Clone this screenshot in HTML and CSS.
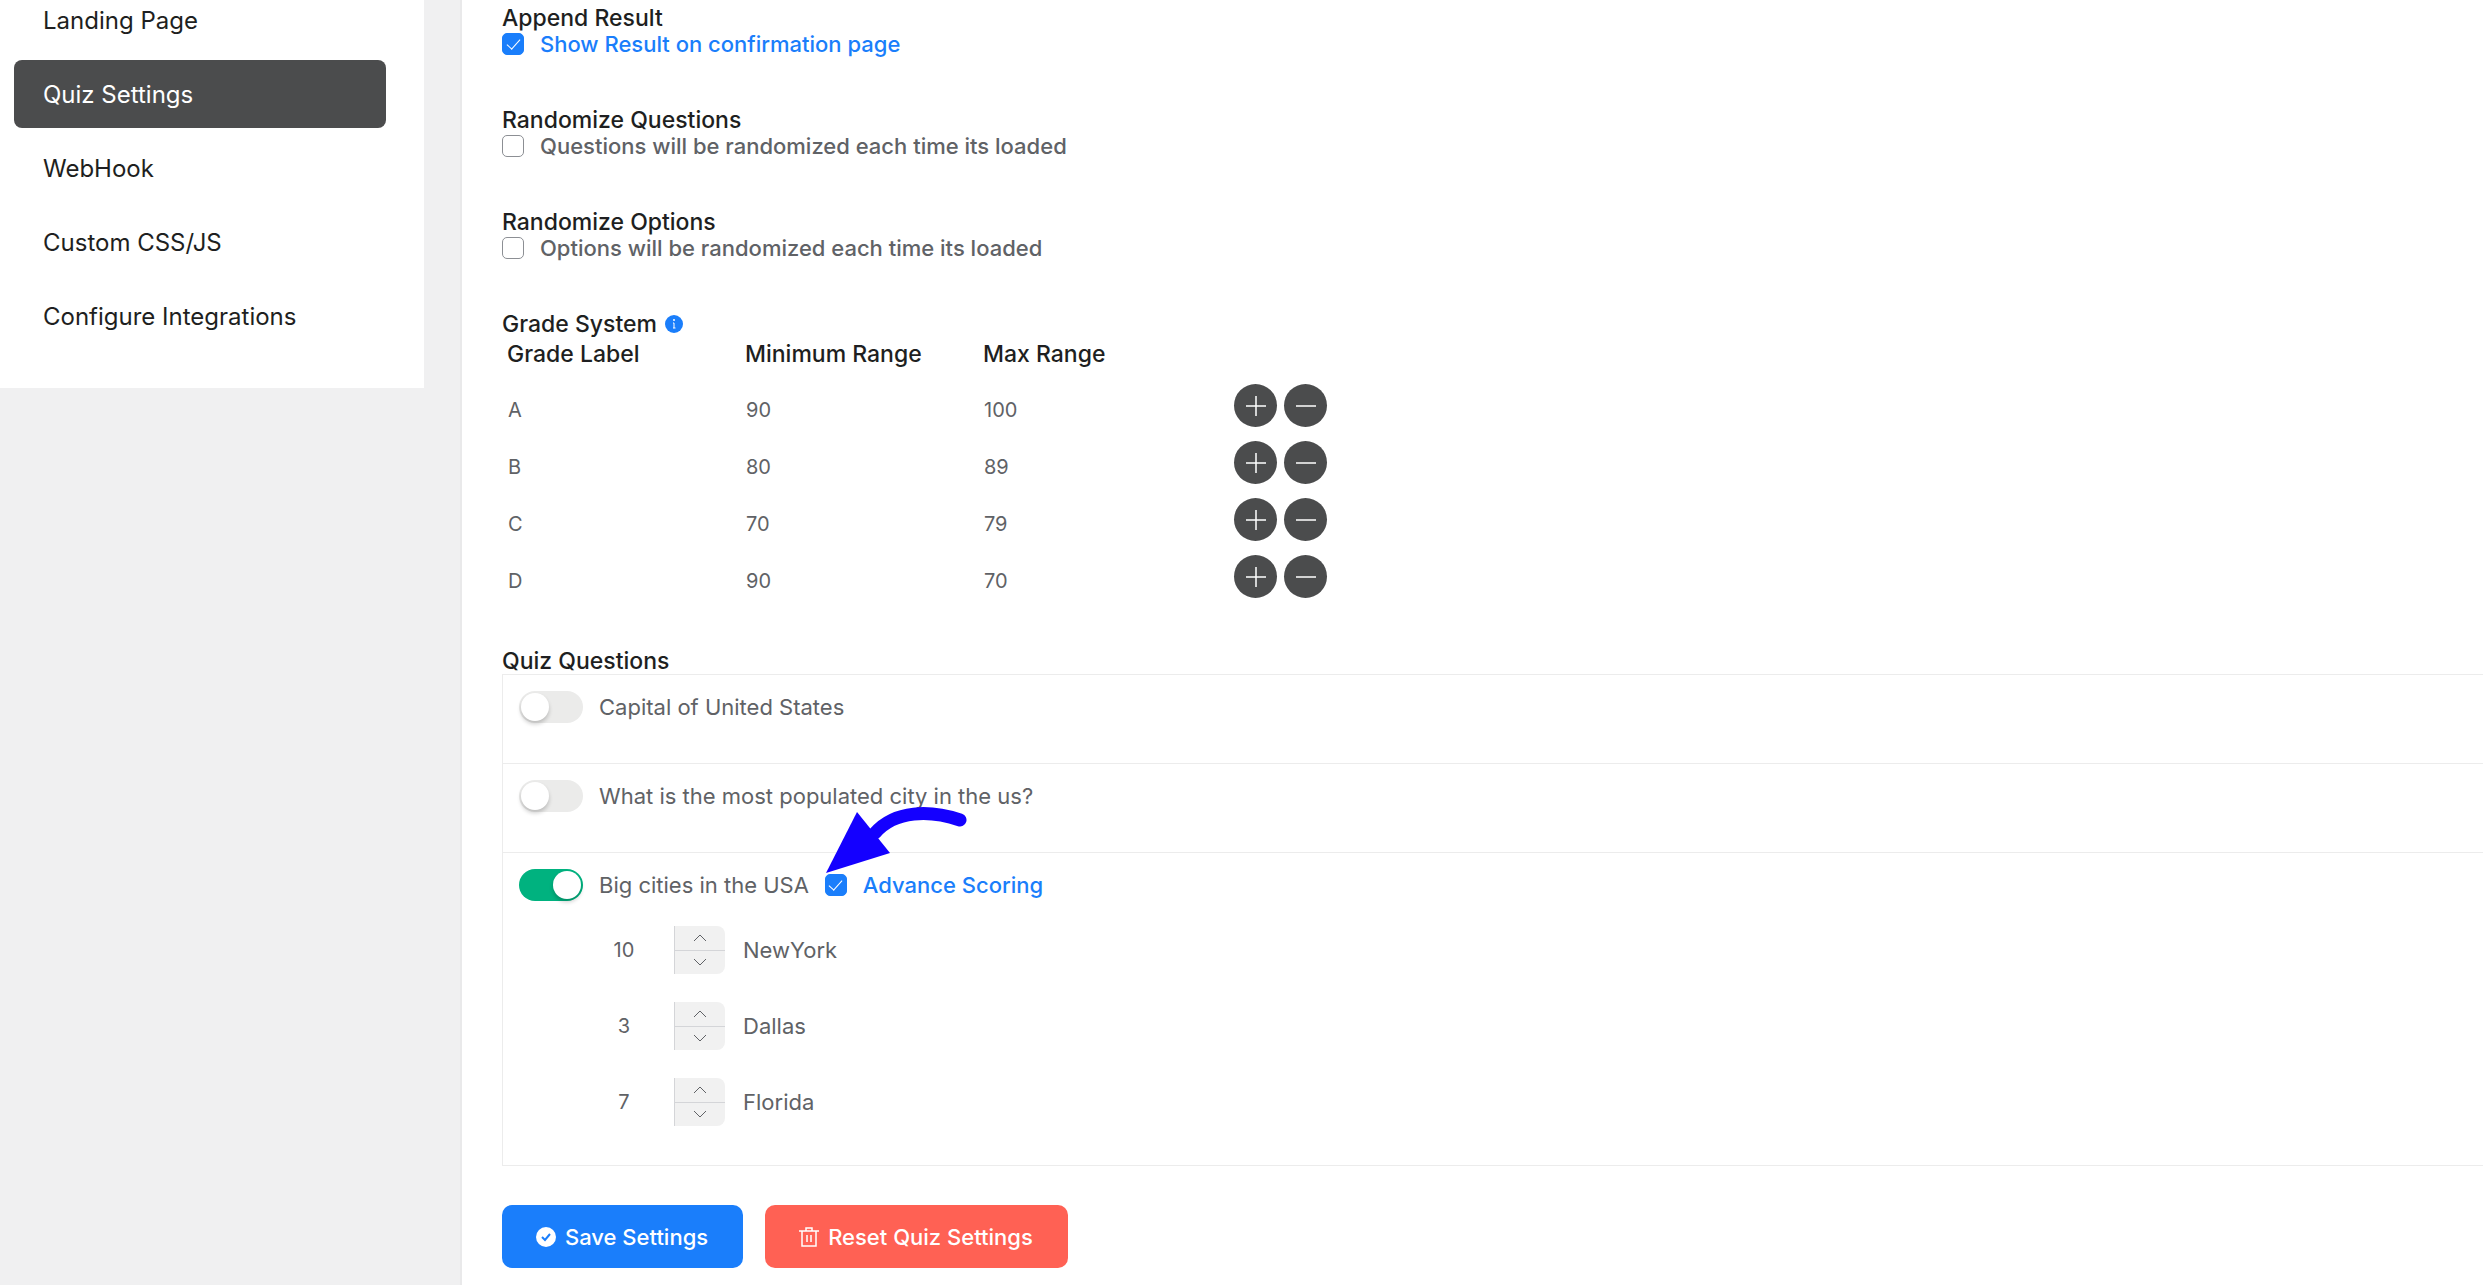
FILE: index.html
```html
<!DOCTYPE html>
<html lang="en">
<head>
    <meta charset="UTF-8">
    <meta name="viewport" content="width=device-width, initial-scale=1.0">
    <title>Quiz Settings</title>
    <link rel="stylesheet" href="styles.css">
</head>
<body>
    <div class="layout">
        <nav class="sidebar">
            <a href="#landing">Landing Page</a>
            <a href="#quiz" class="active">Quiz Settings</a>
            <a href="#webhook">WebHook</a>
            <a href="#custom">Custom CSS/JS</a>
            <a href="#integrations">Configure Integrations</a>
        </nav>

        <main class="content">
            <section class="field">
                <h2>Append Result</h2>
                <label class="check"><input type="checkbox" checked><span>Show Result on confirmation page</span></label>
            </section>
            <section class="field">
                <h2>Randomize Questions</h2>
                <label class="check"><input type="checkbox"><span>Questions will be randomized each time its loaded</span></label>
            </section>
            <section class="field">
                <h2>Randomize Options</h2>
                <label class="check"><input type="checkbox"><span>Options will be randomized each time its loaded</span></label>
            </section>

            <section class="grades">
                <h2>Grade System
                    <svg class="info" viewBox="0 0 18 18"><circle cx="9" cy="9" r="9" fill="#1a7efb"/><circle cx="9" cy="5" r="1" fill="#fff"/><path d="M8 8h1v5M8 13h2.500" fill="none" stroke="#fff"/></svg>
                </h2>
                <table>
                    <thead>
                        <tr><th>Grade Label</th><th>Minimum Range</th><th>Max Range</th><td></td></tr>
                    </thead>
                    <tbody>
                        <tr>
                            <td><input type="text" aria-label="Grade label" value="A"></td>
                            <td><input type="text" aria-label="Minimum range" value="90"></td>
                            <td><input type="text" aria-label="Max range" value="100"></td>
                            <td class="actions">
                                <button type="button" aria-label="Add"><svg viewBox="0 0 22 22"><path d="M1 11h20M11 1v20"/></svg></button>
                                <button type="button" aria-label="Remove"><svg viewBox="0 0 22 22"><path d="M1 11h20"/></svg></button>
                            </td>
                        </tr>
                        <tr>
                            <td><input type="text" aria-label="Grade label" value="B"></td>
                            <td><input type="text" aria-label="Minimum range" value="80"></td>
                            <td><input type="text" aria-label="Max range" value="89"></td>
                            <td class="actions">
                                <button type="button" aria-label="Add"><svg viewBox="0 0 22 22"><path d="M1 11h20M11 1v20"/></svg></button>
                                <button type="button" aria-label="Remove"><svg viewBox="0 0 22 22"><path d="M1 11h20"/></svg></button>
                            </td>
                        </tr>
                        <tr>
                            <td><input type="text" aria-label="Grade label" value="C"></td>
                            <td><input type="text" aria-label="Minimum range" value="70"></td>
                            <td><input type="text" aria-label="Max range" value="79"></td>
                            <td class="actions">
                                <button type="button" aria-label="Add"><svg viewBox="0 0 22 22"><path d="M1 11h20M11 1v20"/></svg></button>
                                <button type="button" aria-label="Remove"><svg viewBox="0 0 22 22"><path d="M1 11h20"/></svg></button>
                            </td>
                        </tr>
                        <tr>
                            <td><input type="text" aria-label="Grade label" value="D"></td>
                            <td><input type="text" aria-label="Minimum range" value="90"></td>
                            <td><input type="text" aria-label="Max range" value="70"></td>
                            <td class="actions">
                                <button type="button" aria-label="Add"><svg viewBox="0 0 22 22"><path d="M1 11h20M11 1v20"/></svg></button>
                                <button type="button" aria-label="Remove"><svg viewBox="0 0 22 22"><path d="M1 11h20"/></svg></button>
                            </td>
                        </tr>
                    </tbody>
                </table>
            </section>

            <section>
                <h2>Quiz Questions</h2>
                <div class="questions">
                    <div class="question">
                        <label class="toggle"><input type="checkbox"><span>Capital of United States</span></label>
                    </div>
                    <div class="question">
                        <label class="toggle"><input type="checkbox"><span>What is the most populated city in the us?</span></label>
                    </div>
                    <div class="question">
                        <div class="question-head">
                            <label class="toggle"><input type="checkbox" checked><span>Big cities in the USA</span></label>
                            <label class="check advance">
                                <input type="checkbox" checked><span>Advance Scoring</span>
                                <svg class="arrow" viewBox="0 0 145 68"><path d="M50 27C70 4 105 4 135 14" fill="none" stroke="#1400ff" stroke-width="13" stroke-linecap="round"/><path d="M1 67L32 6L65 47Z" fill="#1400ff"/></svg>
                            </label>
                        </div>
                        <div class="scores">
                            <div class="score">
                                <input type="number" id="newyork" value="10">
                                <div class="stepper">
                                    <button type="button" aria-label="Increase"><svg viewBox="0 0 12 7"><path d="M0 7L6 1L12 7"/></svg></button>
                                    <button type="button" aria-label="Decrease"><svg viewBox="0 0 12 7"><path d="M0 0L6 6L12 0"/></svg></button>
                                </div>
                                <label for="newyork">NewYork</label>
                            </div>
                            <div class="score">
                                <input type="number" id="dallas" value="3">
                                <div class="stepper">
                                    <button type="button" aria-label="Increase"><svg viewBox="0 0 12 7"><path d="M0 7L6 1L12 7"/></svg></button>
                                    <button type="button" aria-label="Decrease"><svg viewBox="0 0 12 7"><path d="M0 0L6 6L12 0"/></svg></button>
                                </div>
                                <label for="dallas">Dallas</label>
                            </div>
                            <div class="score">
                                <input type="number" id="florida" value="7">
                                <div class="stepper">
                                    <button type="button" aria-label="Increase"><svg viewBox="0 0 12 7"><path d="M0 7L6 1L12 7"/></svg></button>
                                    <button type="button" aria-label="Decrease"><svg viewBox="0 0 12 7"><path d="M0 0L6 6L12 0"/></svg></button>
                                </div>
                                <label for="florida">Florida</label>
                            </div>
                        </div>
                    </div>
                </div>
            </section>

            <div class="buttons">
                <button type="button" class="btn save">
                    <svg viewBox="0 0 20 20"><circle cx="10" cy="10" r="10" fill="#fff"/><path d="M6 10L9 13L14 7" fill="none" stroke="#1a7efb" stroke-width="2"/></svg>
                    Save Settings
                </button>
                <button type="button" class="btn reset">
                    <svg viewBox="0 0 20 20"><path d="M0 4h20M3 4v15h14V4M7 4V1h6v3M8 8v7M12 8v7" fill="none" stroke="#fff" stroke-width="1.500"/></svg>
                    Reset Quiz Settings
                </button>
            </div>
        </main>
    </div>
</body>
</html>
```

FILE: styles.css
```css
* {
    box-sizing: border-box;
}

body {
    margin: 0;
    background-color: #f0f0f1;
    color: #606266;
    font-family: Inter, "Liberation Sans", sans-serif;
    font-size: 22px;
    line-height: 26px;
}

input,
button {
    font: inherit;
    color: inherit;
    margin: 0;
}

button {
    border: 0;
    padding: 0;
    cursor: pointer;
}

h2 {
    margin: 0;
    color: #1e1f21;
    font-size: 23px;
    font-weight: 500;
    line-height: 26px;
}

.layout {
    display: flex;
    align-items: flex-start;
    min-height: 100vh;
    overflow: hidden;
}

/* Sidebar */
.sidebar {
    display: flex;
    flex-direction: column;
    flex: 0 0 424px;
    gap: 6px;
    margin-top: -14px;
    padding: 0 38px 38px 14px;
    background-color: #fff;
}

.sidebar a {
    padding: 22px 29px 20px;
    border-radius: 8px;
    color: #1e1f21;
    font-size: 24px;
    text-decoration: none;
}

.sidebar a.active {
    background-color: #4b4c4d;
    color: #fff;
}

/* Content */
.content {
    flex: 1;
    align-self: stretch;
    margin-left: 36px;
    padding: 5px 0 16px 40px;
    border-left: 2px solid #e9e9ea;
    background-color: #fff;
}

.field {
    margin-bottom: 50px;
}

.check {
    display: flex;
    align-items: center;
    gap: 16px;
    width: max-content;
    font-weight: 500;
}

.check input {
    appearance: none;
    width: 22px;
    height: 22px;
    border: 1px solid #8c8f94;
    border-radius: 5px;
    background-color: #fff;
}

.check input:checked {
    display: grid;
    place-items: center;
    border-color: #1a7efb;
    background-color: #1a7efb;
}

.check input:checked::before {
    content: "";
    width: 6px;
    height: 12px;
    margin-bottom: 4px;
    border: solid #fff;
    border-width: 0 1px 1px 0;
    transform: rotate(42deg);
}

.check input:checked + span {
    color: #1a7efb;
}

/* Grade table */
.grades {
    margin-bottom: 43px;
}

.info {
    width: 18px;
    height: 18px;
    margin-left: 2px;
    vertical-align: -1px;
}

table {
    border-collapse: collapse;
    table-layout: fixed;
    width: 952px;
}

th {
    height: 40px;
    padding: 4px 5px 10px;
    color: #1e1f21;
    font-size: 23px;
    font-weight: 500;
    text-align: left;
}

td {
    height: 57px;
    padding: 0 6px;
}

thead td {
    height: 40px;
}

td input {
    display: block;
    width: 100%;
    padding: 8px 0 0;
    border: 0;
    background: none;
    font-size: 20px;
}

.actions {
    padding: 0 0 0 18px;
    font-size: 0;
}

.actions button {
    width: 43px;
    height: 43px;
    margin-right: 7px;
    border-radius: 50%;
    background-color: #4b4c4d;
    vertical-align: middle;
}

.actions svg {
    display: block;
    width: 22px;
    height: 22px;
    margin: 0 auto;
    stroke: #fff;
    stroke-width: 1.5;
}

/* Questions */
.questions {
    border: 1px solid #ececec;
    border-right: 0;
}

.question {
    min-height: 88px;
    padding: 16px;
}

.question + .question {
    min-height: 89px;
    border-top: 1px solid #ececec;
}

.question:last-child {
    padding-bottom: 39px;
}

.question-head {
    display: flex;
    gap: 16px;
}

.toggle {
    display: flex;
    align-items: center;
    gap: 16px;
    width: max-content;
    height: 32px;
}

.toggle input {
    appearance: none;
    width: 64px;
    height: 32px;
    padding: 2px;
    border-radius: 16px;
    background-color: #ebebea;
}

.toggle input::before {
    content: "";
    display: block;
    width: 28px;
    height: 28px;
    border-radius: 50%;
    background-color: #fff;
    box-shadow: 0 3px 4px rgba(0, 0, 0, 0.2);
}

.toggle input:checked {
    background-color: #00b27f;
}

.toggle input:checked::before {
    margin-left: auto;
}

.advance {
    position: relative;
}

.arrow {
    position: absolute;
    left: 0;
    bottom: 27px;
    width: 145px;
    height: 68px;
}

.scores {
    display: flex;
    flex-direction: column;
    gap: 28px;
    margin-top: 25px;
    padding-left: 55px;
}

.score {
    display: flex;
    align-items: center;
}

.score input {
    appearance: textfield;
    width: 100px;
    border: 0;
    background: none;
    font-size: 20px;
    text-align: center;
}

.score input::-webkit-inner-spin-button {
    display: none;
}

.stepper {
    display: flex;
    flex-direction: column;
    width: 51px;
    height: 48px;
    margin-right: 18px;
    overflow: hidden;
    border-left: 1px solid #d4d5d8;
    border-radius: 0 8px 8px 0;
}

.stepper button {
    flex: 1;
    background-color: #f1f1f1;
}

.stepper button + button {
    border-top: 1px solid #d4d5d8;
}

.stepper svg {
    display: block;
    width: 12px;
    height: 7px;
    margin: 0 auto;
    fill: none;
    stroke: #606266;
}

/* Buttons */
.buttons {
    display: flex;
    gap: 22px;
    margin-top: 39px;
}

.btn {
    display: flex;
    align-items: center;
    gap: 9px;
    height: 63px;
    padding: 0 35px 0 34px;
    border-radius: 10px;
    color: #fff;
    font-weight: 500;
}

.btn svg {
    width: 20px;
    height: 20px;
}

.save {
    background-color: #1a7efb;
}

.reset {
    background-color: #ff6154;
}
```
